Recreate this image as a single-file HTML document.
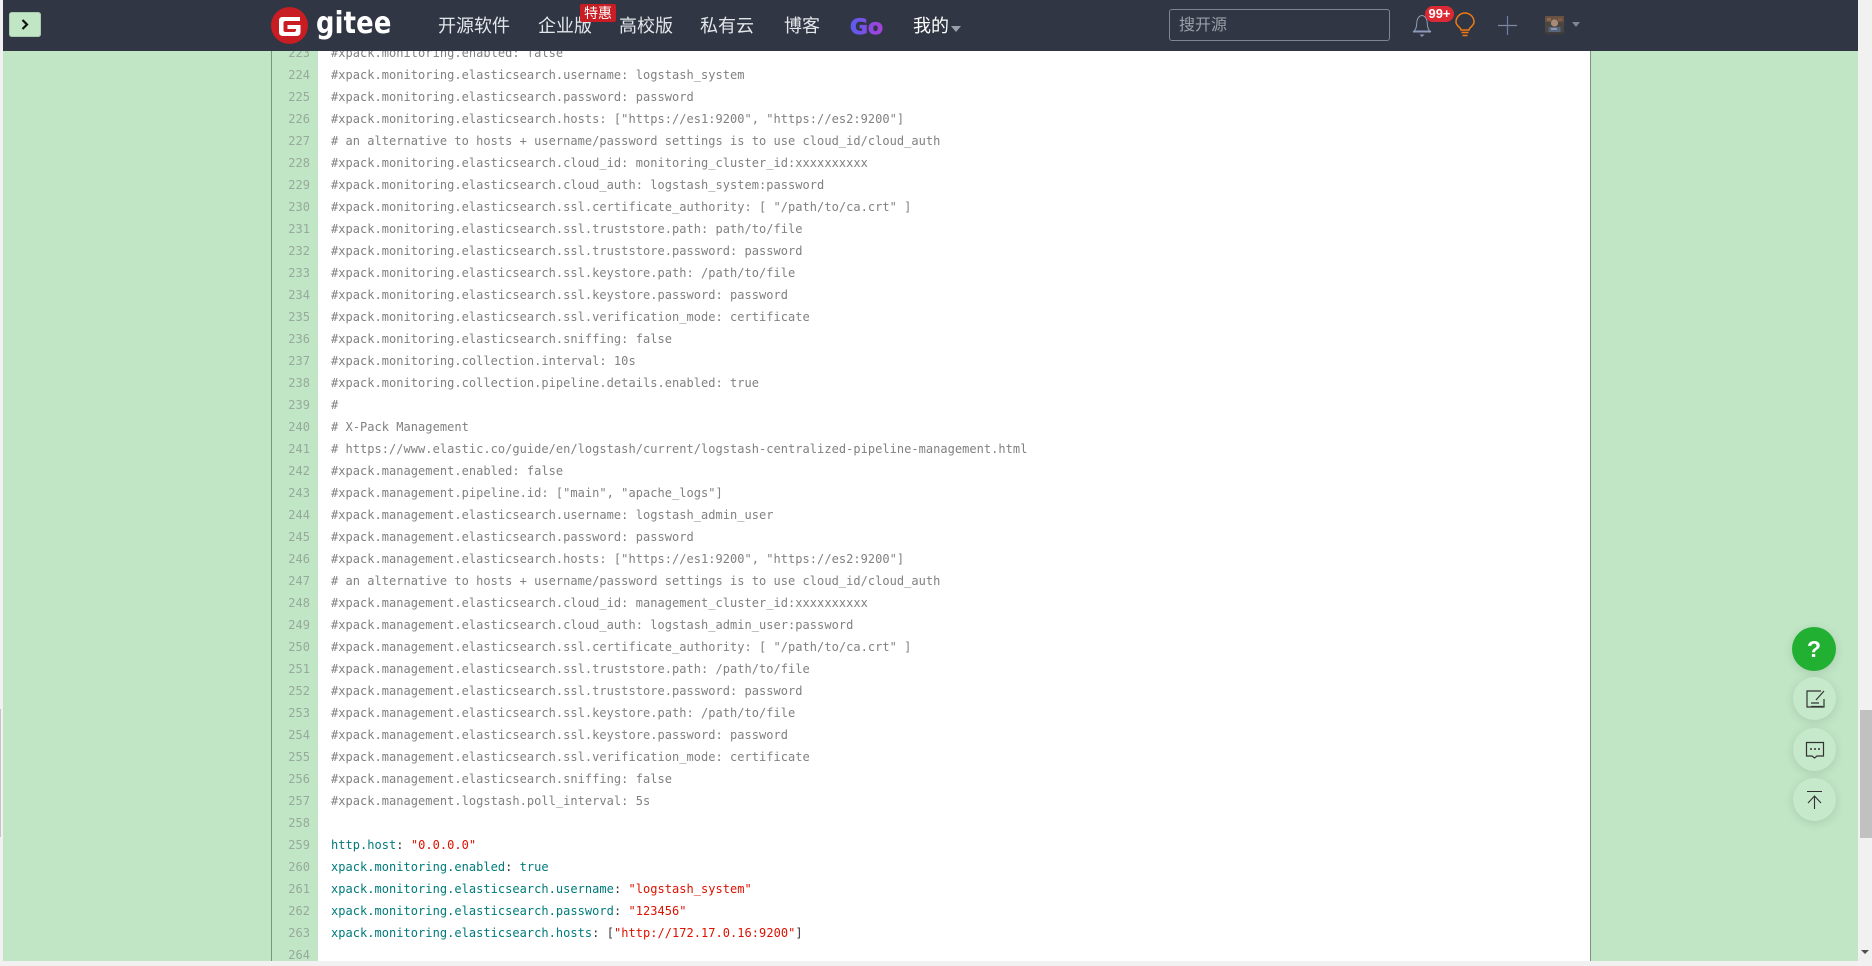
<!DOCTYPE html>
<html lang="zh">
<head>
<meta charset="utf-8">
<title>gitee</title>
<style>
html,body{margin:0;padding:0;width:1872px;height:961px;overflow:hidden;background:#f1f1f1;font-family:"Liberation Sans","Noto Sans CJK SC",sans-serif}
#page{position:absolute;left:3px;top:0;width:1855px;height:961px;background:#c1e6c6;overflow:hidden}
.abs{position:absolute}
#gut{position:absolute;left:271px;top:0;width:47px;height:961px;background:#c1e6c6;border-left:1px solid #7a9680}
#code{position:absolute;left:318px;top:0;width:1272px;height:961px;background:#fff;border-right:1px solid #7a9680}
.ln{position:absolute;left:3px;width:307px;height:22px;text-align:right;font:12px/22px "DejaVu Sans Mono","Liberation Mono",monospace;color:#96a99a;letter-spacing:.03px}
.l{position:absolute;left:331px;height:22px;white-space:pre;font:12px/22px "DejaVu Sans Mono","Liberation Mono",monospace;letter-spacing:.03px;color:#808080}
.k{color:#007a7a}.s{color:#dd1100}.d{color:#333}
#hd{position:absolute;left:3px;top:0;width:1855px;height:51px;background:#303643}
.nav{position:absolute;top:13px;font-size:18px;line-height:26px;color:#e3e6ea;white-space:nowrap}
#sb{position:absolute;left:1858px;top:0;width:14px;height:961px;background:#f1f1f1}
.fab{position:absolute;left:1793px;width:43px;height:43px;border-radius:50%;background:#c6e8cb;box-shadow:0 2px 10px rgba(0,0,0,.12)}
</style>
</head>
<body>
<div id="page"></div>
<div id="gut"></div>
<div id="code"></div>

<div class="ln" style="top:42px">223</div>
<div class="ln" style="top:64px">224</div>
<div class="ln" style="top:86px">225</div>
<div class="ln" style="top:108px">226</div>
<div class="ln" style="top:130px">227</div>
<div class="ln" style="top:152px">228</div>
<div class="ln" style="top:174px">229</div>
<div class="ln" style="top:196px">230</div>
<div class="ln" style="top:218px">231</div>
<div class="ln" style="top:240px">232</div>
<div class="ln" style="top:262px">233</div>
<div class="ln" style="top:284px">234</div>
<div class="ln" style="top:306px">235</div>
<div class="ln" style="top:328px">236</div>
<div class="ln" style="top:350px">237</div>
<div class="ln" style="top:372px">238</div>
<div class="ln" style="top:394px">239</div>
<div class="ln" style="top:416px">240</div>
<div class="ln" style="top:438px">241</div>
<div class="ln" style="top:460px">242</div>
<div class="ln" style="top:482px">243</div>
<div class="ln" style="top:504px">244</div>
<div class="ln" style="top:526px">245</div>
<div class="ln" style="top:548px">246</div>
<div class="ln" style="top:570px">247</div>
<div class="ln" style="top:592px">248</div>
<div class="ln" style="top:614px">249</div>
<div class="ln" style="top:636px">250</div>
<div class="ln" style="top:658px">251</div>
<div class="ln" style="top:680px">252</div>
<div class="ln" style="top:702px">253</div>
<div class="ln" style="top:724px">254</div>
<div class="ln" style="top:746px">255</div>
<div class="ln" style="top:768px">256</div>
<div class="ln" style="top:790px">257</div>
<div class="ln" style="top:812px">258</div>
<div class="ln" style="top:834px">259</div>
<div class="ln" style="top:856px">260</div>
<div class="ln" style="top:878px">261</div>
<div class="ln" style="top:900px">262</div>
<div class="ln" style="top:922px">263</div>
<div class="ln" style="top:944px">264</div>

<div class="l" style="top:42px">#xpack.monitoring.enabled: false</div>
<div class="l" style="top:64px">#xpack.monitoring.elasticsearch.username: logstash_system</div>
<div class="l" style="top:86px">#xpack.monitoring.elasticsearch.password: password</div>
<div class="l" style="top:108px">#xpack.monitoring.elasticsearch.hosts: ["https://es1:9200", "https://es2:9200"]</div>
<div class="l" style="top:130px"># an alternative to hosts + username/password settings is to use cloud_id/cloud_auth</div>
<div class="l" style="top:152px">#xpack.monitoring.elasticsearch.cloud_id: monitoring_cluster_id:xxxxxxxxxx</div>
<div class="l" style="top:174px">#xpack.monitoring.elasticsearch.cloud_auth: logstash_system:password</div>
<div class="l" style="top:196px">#xpack.monitoring.elasticsearch.ssl.certificate_authority: [ "/path/to/ca.crt" ]</div>
<div class="l" style="top:218px">#xpack.monitoring.elasticsearch.ssl.truststore.path: path/to/file</div>
<div class="l" style="top:240px">#xpack.monitoring.elasticsearch.ssl.truststore.password: password</div>
<div class="l" style="top:262px">#xpack.monitoring.elasticsearch.ssl.keystore.path: /path/to/file</div>
<div class="l" style="top:284px">#xpack.monitoring.elasticsearch.ssl.keystore.password: password</div>
<div class="l" style="top:306px">#xpack.monitoring.elasticsearch.ssl.verification_mode: certificate</div>
<div class="l" style="top:328px">#xpack.monitoring.elasticsearch.sniffing: false</div>
<div class="l" style="top:350px">#xpack.monitoring.collection.interval: 10s</div>
<div class="l" style="top:372px">#xpack.monitoring.collection.pipeline.details.enabled: true</div>
<div class="l" style="top:394px">#</div>
<div class="l" style="top:416px"># X-Pack Management</div>
<div class="l" style="top:438px"># https://www.elastic.co/guide/en/logstash/current/logstash-centralized-pipeline-management.html</div>
<div class="l" style="top:460px">#xpack.management.enabled: false</div>
<div class="l" style="top:482px">#xpack.management.pipeline.id: ["main", "apache_logs"]</div>
<div class="l" style="top:504px">#xpack.management.elasticsearch.username: logstash_admin_user</div>
<div class="l" style="top:526px">#xpack.management.elasticsearch.password: password</div>
<div class="l" style="top:548px">#xpack.management.elasticsearch.hosts: ["https://es1:9200", "https://es2:9200"]</div>
<div class="l" style="top:570px"># an alternative to hosts + username/password settings is to use cloud_id/cloud_auth</div>
<div class="l" style="top:592px">#xpack.management.elasticsearch.cloud_id: management_cluster_id:xxxxxxxxxx</div>
<div class="l" style="top:614px">#xpack.management.elasticsearch.cloud_auth: logstash_admin_user:password</div>
<div class="l" style="top:636px">#xpack.management.elasticsearch.ssl.certificate_authority: [ "/path/to/ca.crt" ]</div>
<div class="l" style="top:658px">#xpack.management.elasticsearch.ssl.truststore.path: /path/to/file</div>
<div class="l" style="top:680px">#xpack.management.elasticsearch.ssl.truststore.password: password</div>
<div class="l" style="top:702px">#xpack.management.elasticsearch.ssl.keystore.path: /path/to/file</div>
<div class="l" style="top:724px">#xpack.management.elasticsearch.ssl.keystore.password: password</div>
<div class="l" style="top:746px">#xpack.management.elasticsearch.ssl.verification_mode: certificate</div>
<div class="l" style="top:768px">#xpack.management.elasticsearch.sniffing: false</div>
<div class="l" style="top:790px">#xpack.management.logstash.poll_interval: 5s</div>
<div class="l" style="top:834px"><span class="k">http.host</span><span class="d">:</span> <span class="s">"0.0.0.0"</span></div>
<div class="l" style="top:856px"><span class="k">xpack.monitoring.enabled</span><span class="d">:</span> <span class="k">true</span></div>
<div class="l" style="top:878px"><span class="k">xpack.monitoring.elasticsearch.username</span><span class="d">:</span> <span class="s">"logstash_system"</span></div>
<div class="l" style="top:900px"><span class="k">xpack.monitoring.elasticsearch.password</span><span class="d">:</span> <span class="s">"123456"</span></div>
<div class="l" style="top:922px"><span class="k">xpack.monitoring.elasticsearch.hosts</span><span class="d">:</span> <span class="d">[</span><span class="s">"http://172.17.0.16:9200"</span><span class="d">]</span></div>

<div id="hd"></div>

<div class="abs" style="left:9px;top:12px;width:32px;height:25px;background:#c1e6c6;border-radius:3px;box-shadow:inset 0 0 0 1px #a8c9ad">
<svg width="32" height="25" viewBox="0 0 32 25" style="display:block"><path d="M13.5 8 L18 12.5 L13.5 17" fill="none" stroke="#111" stroke-width="2.2"/></svg>
</div>

<svg class="abs" style="left:271px;top:7px" width="37" height="37" viewBox="0 0 37 37">
<circle cx="18.5" cy="18.5" r="18.5" fill="#c71d23"/>
<path d="M8 13.5 Q8 10 11.5 10 H29 V14 H14.5 Q12.5 14 12.5 16 V23 Q12.5 25 14.5 25 H23 Q25 25 25 23 V22 H16.5 V18 H29.5 V25 Q29.5 29 25.5 29 H12 Q8 29 8 25 Z" fill="#fff"/>
</svg>
<div class="abs" style="left:316px;top:6px;font:bold 30px/36px 'DejaVu Sans',sans-serif;color:#fff;letter-spacing:.2px;transform:scaleX(.86);transform-origin:left">gitee</div>

<div class="nav" style="left:438px">开源软件</div>
<div class="nav" style="left:538px">企业版</div>
<div class="abs" style="left:580px;top:4px;width:36px;height:18px;background:#c71d23;border-radius:2px;color:#fff;font-size:14px;line-height:18px;text-align:center">特惠</div>
<div class="nav" style="left:619px">高校版</div>
<div class="nav" style="left:700px">私有云</div>
<div class="nav" style="left:784px">博客</div>
<svg class="abs" style="left:848px;top:12px" width="38" height="28" viewBox="0 0 38 28">
<defs><linearGradient id="go" x1="0" x2="1"><stop offset="0" stop-color="#5a5cf0"/><stop offset="1" stop-color="#a840d8"/></linearGradient></defs>
<text x="2" y="22" fill="url(#go)" stroke="url(#go)" stroke-width=".8" font-family="DejaVu Sans, sans-serif" font-weight="bold" font-size="21" textLength="33" lengthAdjust="spacingAndGlyphs">Go</text>
</svg>
<div class="nav" style="left:913px;color:#fff">我的</div>
<div class="abs" style="left:951px;top:26px;width:0;height:0;border-left:5px solid transparent;border-right:5px solid transparent;border-top:6px solid #9aa0ab"></div>

<div class="abs" style="left:1169px;top:9px;width:219px;height:30px;border:1px solid #7e8694;border-radius:3px;color:#9a9fa8;font-size:16px;line-height:32px;text-indent:9px">搜开源</div>

<svg class="abs" style="left:1410px;top:12px" width="24" height="26" viewBox="0 0 24 26">
<path d="M4 19 C7 17 6.5 12 7 9 C7.5 6 9.5 3.5 12 3.5 C14.5 3.5 16.5 6 17 9 C17.5 12 17 17 20 19 Z" fill="none" stroke="#8e9bb8" stroke-width="1"/>
<path d="M3 20 H21" stroke="#8e9bb8" stroke-width="1"/><path d="M9.5 22.5 H14.5 L12 25 Z" fill="#8e9bb8"/>
</svg>
<div class="abs" style="left:1425px;top:6px;width:29px;height:16px;background:#dc2a35;border-radius:8px;color:#fff;font:bold 13px/16px 'Liberation Sans',sans-serif;text-align:center">99+</div>
<svg class="abs" style="left:1454px;top:11px" width="22" height="27" viewBox="0 0 22 27">
<path d="M7 19 C7 16.5 2 15 2 11 A9 9 0 0 1 20 11 C20 15 15 16.5 15 19 Z" fill="none" stroke="#f07a12" stroke-width="1.5"/>
<path d="M7.5 21.5 H14.5 M8.5 24.5 H13.5" stroke="#f07a12" stroke-width="1.5"/>
</svg>
<svg class="abs" style="left:1498px;top:16px" width="20" height="20" viewBox="0 0 20 20"><path d="M0 9.5 H19" stroke="#7f8aa3" stroke-width="1.2"/><path d="M9.5 0 V19" stroke="#6a7fa8" stroke-width="1.2"/></svg>
<svg class="abs" style="left:1545px;top:16px" width="19" height="19" viewBox="0 0 19 19">
<rect width="19" height="19" fill="#4a4642"/><rect width="19" height="6" fill="#6a5040"/><rect x="2" y="2" width="4" height="3" fill="#8a6a55"/><rect x="13" y="2" width="4" height="3" fill="#7d5c48"/><circle cx="9.5" cy="7" r="3.6" fill="#a88a78"/><rect x="3.5" y="11" width="12" height="5" fill="#56647c"/><rect x="6" y="12" width="6" height="2" fill="#8a93a8"/><rect y="16.5" width="19" height="2.5" fill="#3a3a3c"/>
</svg>
<div class="abs" style="left:1572px;top:22px;width:0;height:0;border-left:4px solid transparent;border-right:4px solid transparent;border-top:5px solid #7e8694"></div>

<div class="fab" style="top:627px;left:1792px;width:44px;height:44px;background:#22b033;color:#fff;font:bold 23px/44px 'Liberation Sans',sans-serif;text-align:center">?</div>
<div class="fab" style="top:677px">
<svg width="43" height="43" viewBox="0 0 43 43" style="display:block"><path d="M28 14 H14 V30 H31 V22 M23 23 L31 14 M18 26 H26 M18 29.5 H30" fill="none" stroke="#333" stroke-width="1.2"/></svg>
</div>
<div class="fab" style="top:728px">
<svg width="43" height="43" viewBox="0 0 43 43" style="display:block"><path d="M13.5 14.5 H30.5 V28 H24 L21.5 30 L19 28 H13.5 Z" fill="none" stroke="#333" stroke-width="1.2"/><circle cx="18" cy="21" r="1" fill="#333"/><circle cx="22" cy="21" r="1" fill="#333"/><circle cx="26" cy="21" r="1" fill="#333"/></svg>
</div>
<div class="fab" style="top:778px">
<svg width="43" height="43" viewBox="0 0 43 43" style="display:block"><path d="M14 13.5 H29 M15 25 L21.5 18 L28 25 M21.5 18 V31" fill="none" stroke="#333" stroke-width="1.1"/></svg>
</div>

<div id="sb">
<div class="abs" style="left:2px;top:710px;width:12px;height:128px;background:#c1c1c1"></div>
<div class="abs" style="left:3px;top:950px;width:0;height:0;border-left:4px solid transparent;border-right:4px solid transparent;border-top:4px solid #505050"></div>
</div>
<div class="abs" style="left:0;top:709px;width:1px;height:128px;background:#c4c4c4"></div>
</body>
</html>
